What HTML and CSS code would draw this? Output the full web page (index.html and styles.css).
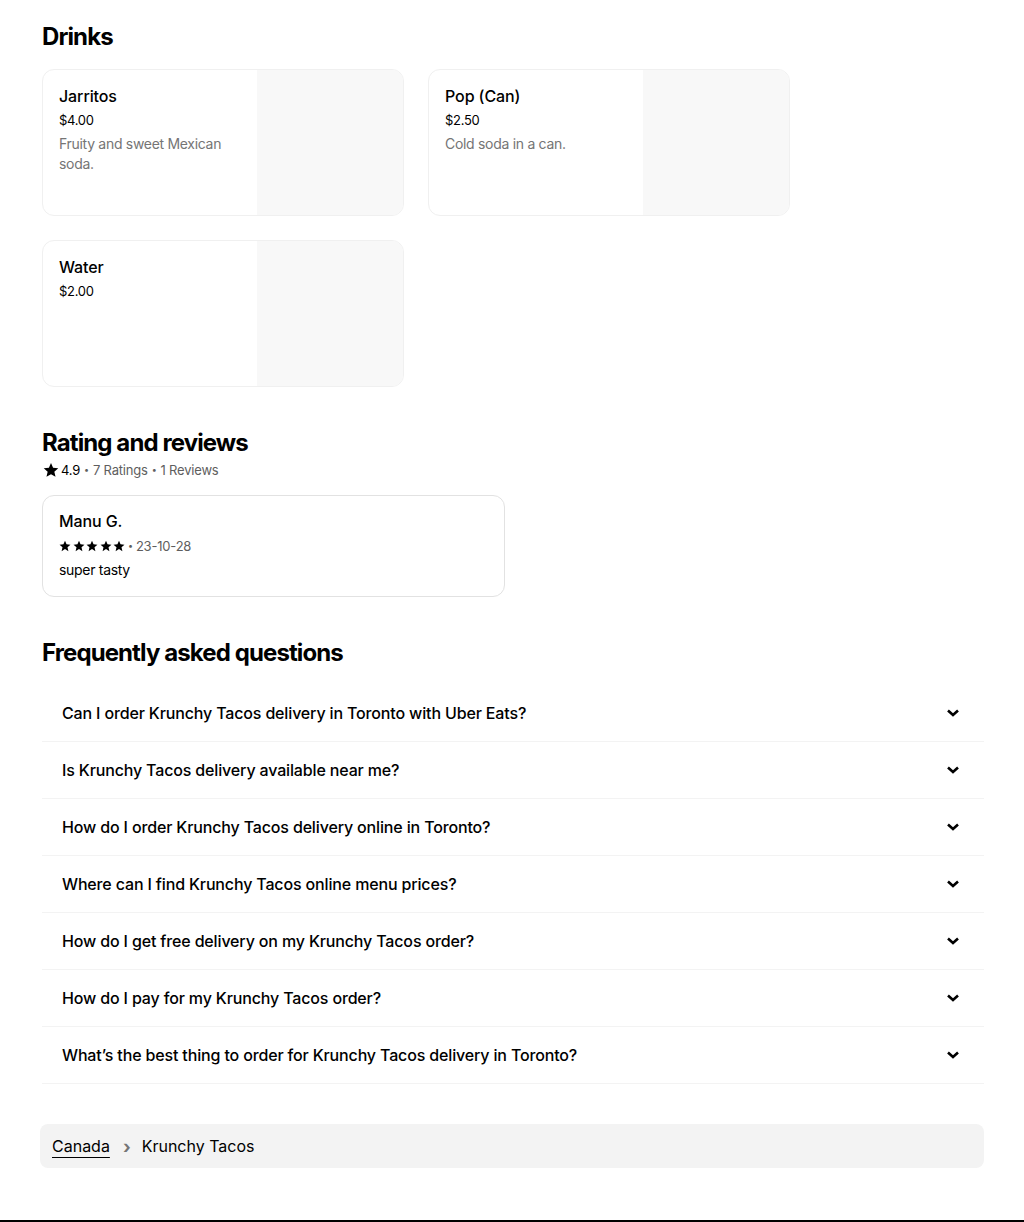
FILE: index.html
```html
<!DOCTYPE html>
<html lang="en">
<head>
<meta charset="utf-8">
<title>Krunchy Tacos</title>
<link rel="stylesheet" href="styles.css">
</head>
<body>
<main class="page">
  <section class="section">
    <h2 class="heading">Drinks</h2>
    <div class="grid">
      <div class="card">
        <div class="card-body">
          <div class="item-title">Jarritos</div>
          <div class="item-price">$4.00</div>
          <div class="item-desc">Fruity and sweet Mexican soda.</div>
        </div>
        <div class="card-img"></div>
      </div>
      <div class="card">
        <div class="card-body">
          <div class="item-title">Pop (Can)</div>
          <div class="item-price">$2.50</div>
          <div class="item-desc">Cold soda in a can.</div>
        </div>
        <div class="card-img"></div>
      </div>
      <div class="card">
        <div class="card-body">
          <div class="item-title">Water</div>
          <div class="item-price">$2.00</div>
        </div>
        <div class="card-img"></div>
      </div>
    </div>
  </section>

  <section class="section">
    <h2 class="heading">Rating and reviews</h2>
    <div class="rating-line">
      <svg class="star-big" viewBox="0 0 24 24"><path d="M12 1.5l3.1 7.2 7.8.7-5.9 5.2 1.8 7.7L12 18.2l-6.8 4.1 1.8-7.7L1.1 9.4l7.8-.7z"/></svg>
      <span class="dark">4.9</span><span class="dot">•</span>7 Ratings<span class="dot">•</span>1 Reviews
    </div>
    <div class="review">
      <div class="review-name">Manu G.</div>
      <div class="review-meta">
        <span class="stars">
          <svg viewBox="0 0 24 24"><path d="M12 1.5l3.1 7.2 7.8.7-5.9 5.2 1.8 7.7L12 18.2l-6.8 4.1 1.8-7.7L1.1 9.4l7.8-.7z"/></svg>
          <svg viewBox="0 0 24 24"><path d="M12 1.5l3.1 7.2 7.8.7-5.9 5.2 1.8 7.7L12 18.2l-6.8 4.1 1.8-7.7L1.1 9.4l7.8-.7z"/></svg>
          <svg viewBox="0 0 24 24"><path d="M12 1.5l3.1 7.2 7.8.7-5.9 5.2 1.8 7.7L12 18.2l-6.8 4.1 1.8-7.7L1.1 9.4l7.8-.7z"/></svg>
          <svg viewBox="0 0 24 24"><path d="M12 1.5l3.1 7.2 7.8.7-5.9 5.2 1.8 7.7L12 18.2l-6.8 4.1 1.8-7.7L1.1 9.4l7.8-.7z"/></svg>
          <svg viewBox="0 0 24 24"><path d="M12 1.5l3.1 7.2 7.8.7-5.9 5.2 1.8 7.7L12 18.2l-6.8 4.1 1.8-7.7L1.1 9.4l7.8-.7z"/></svg>
        </span>
        <span class="dot">•</span>23-10-28
      </div>
      <div class="review-text">super tasty</div>
    </div>
  </section>

  <section class="section">
    <h2 class="heading">Frequently asked questions</h2>
    <ul class="faq">
      <li class="faq-row"><span>Can I order Krunchy Tacos delivery in Toronto with Uber Eats?</span><svg class="chev" viewBox="0 0 12 8"><path d="M1 1.5l5 4.5 5-4.5"/></svg></li>
      <li class="faq-row"><span>Is Krunchy Tacos delivery available near me?</span><svg class="chev" viewBox="0 0 12 8"><path d="M1 1.5l5 4.5 5-4.5"/></svg></li>
      <li class="faq-row"><span>How do I order Krunchy Tacos delivery online in Toronto?</span><svg class="chev" viewBox="0 0 12 8"><path d="M1 1.5l5 4.5 5-4.5"/></svg></li>
      <li class="faq-row"><span>Where can I find Krunchy Tacos online menu prices?</span><svg class="chev" viewBox="0 0 12 8"><path d="M1 1.5l5 4.5 5-4.5"/></svg></li>
      <li class="faq-row"><span>How do I get free delivery on my Krunchy Tacos order?</span><svg class="chev" viewBox="0 0 12 8"><path d="M1 1.5l5 4.5 5-4.5"/></svg></li>
      <li class="faq-row"><span>How do I pay for my Krunchy Tacos order?</span><svg class="chev" viewBox="0 0 12 8"><path d="M1 1.5l5 4.5 5-4.5"/></svg></li>
      <li class="faq-row"><span>What’s the best thing to order for Krunchy Tacos delivery in Toronto?</span><svg class="chev" viewBox="0 0 12 8"><path d="M1 1.5l5 4.5 5-4.5"/></svg></li>
    </ul>
  </section>

  <nav class="crumbs">
    <a class="crumb-link" href="#">Canada</a>
    <span class="crumb-sep">›</span>
    <span class="crumb-cur">Krunchy Tacos</span>
  </nav>
</main>
<footer class="footer"></footer>
</body>
</html>
```

FILE: styles.css
```css
* { box-sizing: border-box; }
html, body { margin: 0; padding: 0; background: #fff; }
body {
  font-family: Inter, "Liberation Sans", sans-serif;
  color: #000;
  -webkit-font-smoothing: antialiased;
}
.page {
  width: 944px;
  margin-left: 40px;
  padding-top: 21px;
  padding-bottom: 52px;
}
.section { padding-left: 2px; padding-right: 0; }
.section + .section { margin-top: 40px; }
.heading {
  margin: 0;
  font-size: 24px;
  line-height: 32px;
  font-weight: 700;
  letter-spacing: -0.9px;
}
.grid {
  margin-top: 16px;
  display: grid;
  grid-template-columns: 362px 362px;
  column-gap: 24px;
  row-gap: 24px;
}
.card {
  display: flex;
  height: 147px;
  border: 1px solid #f0f0f0;
  border-radius: 12px;
  overflow: hidden;
  background: #fff;
}
.card-body {
  flex: 1;
  padding: 15px 16px 0 16px;
}
.card-img {
  width: 146px;
  flex: none;
  background: #f8f8f8;
}
.item-title {
  font-size: 16px;
  line-height: 22px;
  font-weight: 500;
  letter-spacing: -0.1px;
  color: #000;
}
.item-price {
  margin-top: 3px;
  font-size: 13px;
  line-height: 20px;
  letter-spacing: -0.3px;
  color: #000;
}
.item-desc {
  margin-top: 4px;
  font-size: 14px;
  line-height: 20px;
  letter-spacing: -0.3px;
  color: #757575;
}
.rating-line {
  display: flex;
  align-items: center;
  font-size: 13px;
  line-height: 20px;
  color: #5e5e5e;
  letter-spacing: -0.2px;
  margin-top: 1px;
}
.star-big { width: 16px; height: 16px; fill: #000; margin-right: 2px; margin-left: 1px; }
.dark { color: #000; }
.dot { margin: 0 4px; font-size: 9px; color: #5e5e5e; }
.review {
  margin-top: 15px;
  width: 463px;
  border: 1px solid #e2e2e2;
  border-radius: 12px;
  padding: 13px 16px 16px 16px;
}
.review-name {
  font-size: 16px;
  line-height: 24px;
  font-weight: 500;
  letter-spacing: -0.1px;
}
.review-meta {
  margin-top: 3px;
  display: flex;
  align-items: center;
  font-size: 13px;
  line-height: 20px;
  color: #5e5e5e;
  letter-spacing: -0.2px;
}
.stars { display: inline-flex; gap: 1.5px; }
.stars svg { width: 12px; height: 12px; fill: #000; }
.review-meta .dot { margin: 0 3px; }
.review-text {
  margin-top: 4px;
  font-size: 14px;
  line-height: 20px;
  letter-spacing: -0.3px;
  color: #000;
}
.faq {
  list-style: none;
  margin: 16px 0 0 0;
  padding: 0;
}
.faq-row {
  display: flex;
  align-items: center;
  justify-content: space-between;
  height: 57px;
  padding: 0 25px 1px 20px;
  border-bottom: 1px solid #f3f3f3;
  font-size: 16px;
  font-weight: 500;
  letter-spacing: -0.15px;
  color: #000;
}
.chev {
  width: 12px;
  height: 8px;
  fill: none;
  stroke: #000;
  stroke-width: 2.6;
  stroke-linecap: butt;
  stroke-linejoin: miter;
}
.crumbs {
  margin-top: 40px;
  height: 44px;
  background: #f3f3f3;
  border-radius: 8px;
  display: flex;
  align-items: center;
  padding: 0 12px;
  font-size: 16px;
  letter-spacing: 0px;
}
.crumb-link {
  color: #000;
  text-decoration: underline;
  text-underline-offset: 5px;
  text-decoration-thickness: 1px;
}
.crumb-sep { margin: 0 11px 0 13px; color: #757575; font-size: 18px; font-weight: 700; }
.crumb-cur { color: #000; }
.footer {
  height: 40px;
  background: #000;
}
```
